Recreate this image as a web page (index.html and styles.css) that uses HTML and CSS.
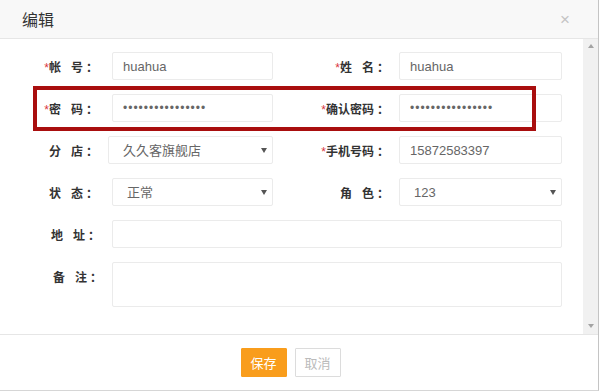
FILE: index.html
```html
<!DOCTYPE html>
<html lang="zh-CN">
<head>
	<meta charset="UTF-8">
	<title>编辑</title>
	<link rel="stylesheet" href="styles.css">
</head>
<body>
	<div class="dialog">
		<div class="dialog-hd">
			<span class="dialog-title">编辑</span>
			<span class="dialog-close">&times;</span>
		</div>
		<div class="dialog-bd">
			<form class="form">
				<label class="lbl"><i>*</i>帐<b class="sp"></b>号<em>：</em></label>
				<input class="ipt" type="text" value="huahua">
				<label class="lbl"><i>*</i>姓<b class="sp"></b>名<em>：</em></label>
				<input class="ipt" type="text" value="huahua">

				<label class="lbl"><i>*</i>密<b class="sp"></b>码<em>：</em></label>
				<input class="ipt pwd" type="password" value="abcdefghijklmnop">
				<label class="lbl"><i>*</i>确认密码<em>：</em></label>
				<input class="ipt pwd" type="password" value="abcdefghijklmnop">

				<label class="lbl">分<b class="sp"></b>店<em>：</em></label>
				<div class="sel-wrap sel-shift">
					<select class="sel"><option>久久客旗舰店</option></select>
				</div>
				<label class="lbl"><i>*</i>手机号码<em>：</em></label>
				<input class="ipt" type="text" value="15872583397">

				<label class="lbl">状<b class="sp"></b>态<em>：</em></label>
				<div class="sel-wrap">
					<select class="sel"><option>正常</option></select>
				</div>
				<label class="lbl">角<b class="sp"></b>色<em>：</em></label>
				<div class="sel-wrap">
					<select class="sel"><option>123</option></select>
				</div>

				<label class="lbl lbl-wide">地<b class="sp"></b>址<em>：</em></label>
				<input class="ipt full" type="text" value="">

				<label class="lbl lbl-wide lbl-top">备<b class="sp"></b>注<em>：</em></label>
				<textarea class="ipt full memo"></textarea>
			</form>
			<div class="scrollbar">
				<span class="arr arr-up"></span>
				<span class="arr arr-down"></span>
			</div>
			<!-- 标注框 -->
			<div class="mark"></div>
		</div>
		<div class="dialog-ft">
			<button class="btn btn-ok" type="button">保存</button>
			<button class="btn btn-cancel" type="button">取消</button>
		</div>
	</div>
</body>
</html>
```
FILE: styles.css
```css
*{
	margin: 0;
	padding: 0;
	box-sizing: border-box;
}
body{
	background: #fff;
	font-family: "Liberation Sans", "Noto Sans CJK SC", sans-serif;
	color: #333;
}
.dialog{
	width: 599px;
	height: 391px;
	border-right: 1px solid #c4c4c4;
	border-bottom: 1px solid #d6d6d6;
	display: flex;
	flex-direction: column;
}
.dialog-hd{
	height: 39px;
	background: #f8f8f8;
	border-bottom: 1px solid #e6e6e6;
	display: flex;
	align-items: center;
	justify-content: space-between;
	padding: 0 28px 0 22px;
}
.dialog-title{
	font-size: 16px;
	color: #333;
}
.dialog-close{
	font-size: 17px;
	color: #c4c4c4;
	line-height: 1;
}
.dialog-bd{
	height: 295px;
	display: flex;
	position: relative;
}
.form{
	flex: 1;
	display: grid;
	grid-template-columns: 112px 161px 126px 163px;
	grid-auto-rows: 28px;
	row-gap: 14px;
	align-items: center;
	padding-top: 13px;
}
.lbl{
	font-size: 12px;
	font-weight: bold;
	color: #333;
	text-align: right;
	padding-right: 17px;
	white-space: nowrap;
}
.form .lbl:nth-of-type(even){
	padding-right: 13px;
}
.lbl i{
	font-style: normal;
	font-weight: normal;
	color: #d9363e;
}
.lbl em{
	font-style: normal;
	display: inline-block;
	width: 9px;
	margin-left: 3px;
	text-align: left;
}
.lbl .sp{
	display: inline-block;
	width: 10px;
}
.lbl-wide{
	padding-right: 15px;
}
.lbl-top{
	align-self: start;
	padding-top: 6px;
}
.ipt{
	height: 28px;
	width: 100%;
	border: 1px solid #ebebeb;
	border-radius: 2px;
	background: #fff;
	padding: 0 10px;
	font-family: "Liberation Sans", "Noto Sans CJK SC", sans-serif;
	font-size: 13px;
	color: #666;
	outline: none;
}
.pwd{
	letter-spacing: 1px;
	font-size: 12px;
}
.full{
	grid-column: 2 / 5;
}
.memo{
	height: 45px;
	resize: none;
	align-self: start;
}
.sel-wrap{
	position: relative;
	height: 28px;
}
.sel-shift{
	margin-left: -4px;
}
.sel-wrap::after{
	content: "";
	position: absolute;
	right: 6px;
	top: 12px;
	border-left: 3px solid transparent;
	border-right: 3px solid transparent;
	border-top: 5px solid #555;
}
.sel{
	appearance: none;
	-webkit-appearance: none;
	width: 100%;
	height: 28px;
	border: 1px solid #ebebeb;
	border-radius: 2px;
	background: #fff;
	padding: 0 14px;
	font-family: "Liberation Sans", "Noto Sans CJK SC", sans-serif;
	font-size: 13px;
	color: #666;
	outline: none;
}
.scrollbar{
	width: 15px;
	background: #f1f1f1;
	display: flex;
	flex-direction: column;
	justify-content: space-between;
	align-items: center;
	padding: 5px 0 6px;
}
.arr{
	width: 0;
	height: 0;
	border-left: 3px solid transparent;
	border-right: 3px solid transparent;
}
.arr-up{
	border-bottom: 4px solid #a3a3a3;
}
.arr-down{
	border-top: 4px solid #a3a3a3;
}
.mark{
	position: absolute;
	left: 33px;
	top: 47px;
	width: 503px;
	height: 45px;
	border: 4px solid #a90e0e;
}
.dialog-ft{
	flex: 1;
	border-top: 1px solid #e6e6e6;
	display: flex;
	justify-content: center;
	align-items: flex-start;
	gap: 8px;
	padding: 13px 17px 0 0;
}
.btn{
	width: 46px;
	height: 29px;
	font-family: "Liberation Sans", "Noto Sans CJK SC", sans-serif;
	font-size: 13px;
	border-radius: 1px;
	cursor: pointer;
}
.btn-ok{
	background: #f99d1c;
	border: 1px solid #f99d1c;
	color: #fff;
}
.btn-cancel{
	background: #fff;
	border: 1px solid #dcdcdc;
	color: #bbb;
}
```
